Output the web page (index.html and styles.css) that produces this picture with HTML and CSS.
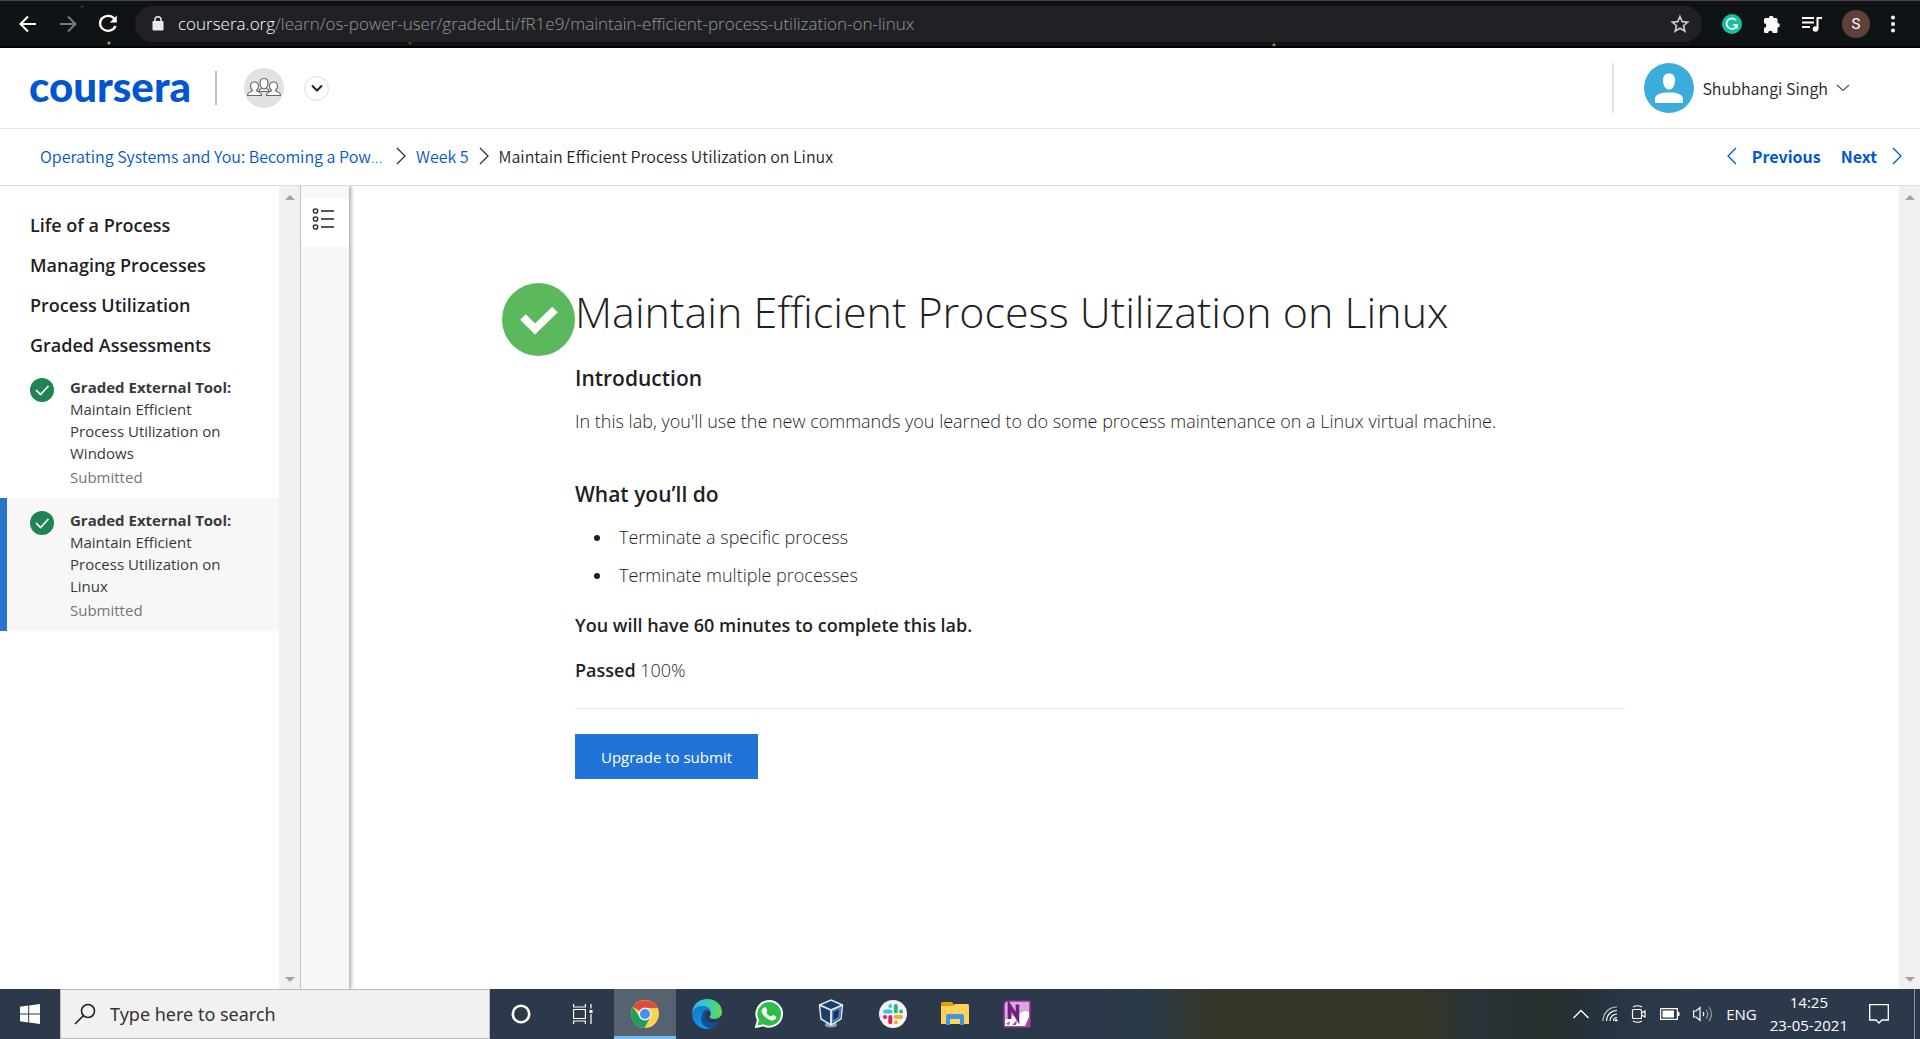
FILE: index.html
```html
<!DOCTYPE html>
<html lang="en">
<head>
<meta charset="utf-8">
<title>Maintain Efficient Process Utilization on Linux | Coursera</title>
<link rel="stylesheet" href="styles.css">
</head>
<body>
<div class="browser">
  <button class="nav-btn" aria-label="Back"><svg width="20" height="20" viewBox="0 0 20 20" fill="none" stroke="#fff" stroke-width="2"><path d="M18 10H3M10 2.500L2.500 10l7.500 7.500"/></svg></button>
  <button class="nav-btn" aria-label="Forward"><svg width="20" height="20" viewBox="0 0 20 20" fill="none" stroke="#77797c" stroke-width="2"><path d="M2 10h15M10 2.500l7.500 7.500-7.500 7.500"/></svg></button>
  <button class="nav-btn" aria-label="Reload"><svg width="20" height="20" viewBox="0 0 20 20" fill="none" stroke="#fff" stroke-width="2.300"><path d="M16.600 5A8 7.500 0 1 0 17.500 12"/><path d="M18.800 1.500v7h-7z" fill="#fff" stroke="none"/></svg></button>
  <div class="address">
    <svg width="12" height="15" viewBox="0 0 12 15"><rect x=".5" y="5" width="11" height="9.500" rx="1.300" fill="#e8eaed"/><path d="M3 6V3.800a3 3 0 0 1 6 0V6" fill="none" stroke="#e8eaed" stroke-width="1.500"/></svg>
    <span class="url"><b>coursera.org</b>/learn/os-power-user/gradedLti/fR1e9/maintain-efficient-process-utilization-on-linux</span>
    <svg width="20" height="20" viewBox="0 0 20 20" fill="none" stroke="#c5c7ca" stroke-width="1.700"><path d="M10 2.500l2.200 5.100 5.500.5-4.200 3.600 1.300 5.400L10 14.200l-4.800 2.900 1.300-5.400-4.200-3.600 5.500-.5z"/></svg>
  </div>
  <div class="extensions">
    <svg width="20" height="20" viewBox="0 0 20 20"><circle cx="10" cy="10" r="10" fill="#15c39a"/><path d="M14 6.300A5.300 5.300 0 1 0 15 11h-4M14.800 10.500v4" fill="none" stroke="#fff" stroke-width="1.700"/></svg>
    <svg width="20" height="20" viewBox="0 0 20 20"><path fill="#fff" d="M2 5.500q0-1.500 1.500-1.500H7a2.200 2.200 0 1 1 4.500 0H14q1.500 0 1.500 1.500V9a2.300 2.300 0 1 1 0 4.600v3.900q0 1.500-1.500 1.500h-3.300a2.300 2.300 0 0 0-4.600 0H3.500Q2 19 2 17.500v-3.600a2.300 2.300 0 0 0 0-4.600z"/></svg>
    <svg width="20" height="18" viewBox="0 0 20 18" fill="none" stroke="#fff" stroke-width="2"><path d="M0 3h12M0 7.500h12M0 12h8"/><path d="M15.500 14V3H20"/><circle cx="13.500" cy="14" r="2.800" fill="#fff" stroke="none"/></svg>
    <span class="profile">S</span>
    <svg width="6" height="18" viewBox="0 0 6 18" fill="#fff"><circle cx="3" cy="2.500" r="2"/><circle cx="3" cy="9" r="2"/><circle cx="3" cy="15.500" r="2"/></svg>
  </div>
</div>

<header class="header">
  <a class="logo" href="#">coursera</a>
  <span class="logo-rule"></span>
  <span class="group"><svg width="36" height="22" viewBox="0 0 36 22" fill="#fff" stroke="#666" stroke-width="1.100"><path d="M13 14.500q0-2.500 3-3h4q3 .5 3 3z"/><path d="M18 1.500c3 0 4 2 4 4.500s-1.500 6-4 6-4-3.500-4-6 1-4.500 4-4.500z"/><path d="M1.500 18.500q0-3 4-4l1-1c-1.500-1.500-2-3-2-4.500 0-2.500 1.500-4 4-4s4 1.500 4 4c0 1.500-.5 3-2 4.500l1 1q4 1 4 4z"/><path d="M20.500 18.500q0-3 4-4l1-1c-1.500-1.500-2-3-2-4.500 0-2.500 1.500-4 4-4s4 1.500 4 4c0 1.500-.5 3-2 4.500l1 1q4 1 4 4z"/></svg></span>
  <button class="switcher" aria-label="Switch programs"><svg width="12" height="8" viewBox="0 0 12 8" fill="none" stroke="#222" stroke-width="2"><path d="M1 1.500l5 5 5-5"/></svg></button>
  <button class="account">
    <svg width="50" height="50" viewBox="0 0 50 50"><circle cx="25" cy="25" r="25" fill="#3badda"/><path fill="#fff" d="M25 10.500c4 0 6 2.500 6 6.500 0 5-2 9.500-6 9.500S19 22 19 17c0-4 2-6.500 6-6.500zM11 40v-4c0-5 6-6.500 14-6.500S39 31 39 36v4z"/></svg>
    <span>Shubhangi Singh</span>
    <svg width="14" height="8" viewBox="0 0 14 8" fill="none" stroke="#555" stroke-width="1.200"><path d="M1 1l6 5.500L13 1"/></svg>
  </button>
</header>

<nav class="crumbs">
  <a class="course" href="#">Operating Systems and You: Becoming a Pow<span class="dots">…</span></a>
  <svg class="sep" width="10" height="18" viewBox="0 0 10 18"><path d="M1 1l8 8-8 8"/></svg>
  <a href="#">Week 5</a>
  <svg class="sep" width="10" height="18" viewBox="0 0 10 18"><path d="M1 1l8 8-8 8"/></svg>
  <span>Maintain Efficient Process Utilization on Linux</span>
  <div class="pager">
    <a href="#"><svg width="10" height="18" viewBox="0 0 10 18"><path d="M9 1L1 9l8 8"/></svg>Previous</a>
    <a href="#">Next<svg width="10" height="18" viewBox="0 0 10 18"><path d="M1 1l8 8-8 8"/></svg></a>
  </div>
</nav>

<div class="workspace">
  <aside class="sidebar">
    <h2>Life of a Process</h2>
    <h2>Managing Processes</h2>
    <h2>Process Utilization</h2>
    <h2>Graded Assessments</h2>
    <a class="item" href="#">
      <svg width="24" height="24" viewBox="0 0 24 24"><circle cx="12" cy="12" r="12" fill="#1f8354"/><path d="M6 12l4.500 4.500L18.500 8" fill="none" stroke="#fff" stroke-width="1.700"/></svg>
      <span class="item-text"><b>Graded External Tool:</b> Maintain Efficient Process Utilization on Windows<small>Submitted</small></span>
    </a>
    <a class="item current" href="#">
      <svg width="24" height="24" viewBox="0 0 24 24"><circle cx="12" cy="12" r="12" fill="#1f8354"/><path d="M6 12l4.500 4.500L18.500 8" fill="none" stroke="#fff" stroke-width="1.700"/></svg>
      <span class="item-text"><b>Graded External Tool:</b> Maintain Efficient Process Utilization on Linux<small>Submitted</small></span>
    </a>
  </aside>
  <div class="scrollbar"><i class="up"></i><i class="down"></i></div>
  <div class="rail">
    <button aria-label="Contents"><svg width="24" height="24" viewBox="0 0 24 24" fill="none" stroke="#222" stroke-width="1.300"><circle cx="3.500" cy="4" r="2.200"/><circle cx="3.500" cy="12" r="2.200"/><circle cx="3.500" cy="20" r="2.200"/><path d="M9 4h13M9 12h13M9 20h13"/></svg></button>
  </div>
  <main class="main">
    <svg class="passed" width="73" height="73" viewBox="0 0 73 73"><circle cx="36.500" cy="36.500" r="36.500" fill="#5cb85c"/><path d="M21 34l12 12 20-19.500" fill="none" stroke="#fff" stroke-width="8" /></svg>
    <article class="article">
      <h1>Maintain Efficient Process Utilization on Linux</h1>
      <h2>Introduction</h2>
      <p>In this lab, you'll use the new commands you learned to do some process maintenance on a Linux virtual machine.</p>
      <h2 class="next">What you’ll do</h2>
      <ul>
        <li>Terminate a specific process</li>
        <li>Terminate multiple processes</li>
      </ul>
      <p class="note"><b>You will have 60 minutes to complete this lab.</b></p>
      <p class="note"><b>Passed</b> 100%</p>
      <hr>
      <button class="submit">Upgrade to submit</button>
    </article>
  </main>
  <div class="scrollbar"><i class="up"></i><i class="down"></i></div>
</div>

<footer class="taskbar">
  <button class="start" aria-label="Start"><svg width="20" height="20" viewBox="0 0 20 20" fill="#fff"><path d="M0 2.800l8.200-1.200v7.900H0zM9.200 1.400L20 0v9.500H9.200zM0 10.500h8.200v7.900L0 17.200zM9.200 10.500H20V20L9.200 18.600z"/></svg></button>
  <label class="search"><svg width="22" height="22" viewBox="0 0 22 22" fill="none" stroke="#222" stroke-width="1.600"><circle cx="14" cy="8" r="6.500"/><path d="M9.500 12.500L1 21"/></svg><input type="text" placeholder="Type here to search" aria-label="Search"></label>
  <button class="tile" aria-label="Cortana"><svg width="22" height="22" viewBox="0 0 22 22"><circle cx="11" cy="11" r="8.200" fill="none" stroke="#fff" stroke-width="2.600"/></svg></button>
  <button class="tile" aria-label="Task view"><svg width="20" height="20" viewBox="0 0 20 20" fill="none" stroke="#fff" stroke-width="1.200"><path d="M.6 5.500h11.800v9H.600zM.6 0v3h11.800V0M.6 20v-3h11.800v3M18 0v4.500M18 10v10"/><path d="M16.500 6h3v3h-3z" fill="#fff" stroke="none"/></svg></button>
  <button class="tile active" aria-label="Chrome"><svg width="28" height="28" viewBox="0 0 28 28"><circle cx="14" cy="14" r="14" fill="#fdd24c"/><path d="M14 14L1.900 7A14 14 0 0 1 26.500 8H14z" fill="#dc4b3e"/><path d="M1.900 7A14 14 0 0 0 13.500 28l5.700-11L8.500 17z" fill="#1ba05f"/><circle cx="14" cy="14" r="6.500" fill="#f1f1f1"/><circle cx="14" cy="14" r="5" fill="#4a8bf5"/></svg></button>
  <button class="tile" aria-label="Edge"><svg width="30" height="30" viewBox="0 0 30 30"><defs><linearGradient id="eg"><stop offset="0" stop-color="#35b4f0"/><stop offset=".5" stop-color="#35c8c8"/><stop offset="1" stop-color="#65dc45"/></linearGradient><linearGradient id="eb" x2="0" y2="1"><stop offset="0" stop-color="#1178c6"/><stop offset="1" stop-color="#1497e8"/></linearGradient></defs><path d="M0 14C1 5 7 0 15 0c9 0 15 6 15 13 0 5-4 7-8 7-4 0-5-1.500-4-3 2-3 0-7-6-8C7 8 2 10 0 14z" fill="url(#eg)"/><path d="M0 14c1.500-4.500 6-7 10-7 6 0 9 3.500 9 7 0-2-2-3-4-3-3 0-5 3-5 7 0 6 4 10 9 11.500C8 32 0 24 0 14z" fill="url(#eb)"/><path d="M10 16c-3 7 2 13 9 13.500 4-1 7-4 9-7.500-5 3-15 2.500-15-5 0-2 1-4 2.500-5C13 12 11 14 10 16z" fill="#104f9d"/></svg></button>
  <button class="tile" aria-label="WhatsApp"><svg width="28" height="28" viewBox="0 0 28 28"><path d="M1 27l2-7A12.800 12.800 0 1 1 8.500 25.300z" fill="#2bbf47" stroke="#fff" stroke-width="2"/><path d="M9 7.500q1.500-1 2.200.5l1 2.300q.3 1-1 2.200 1.500 3 4.600 4.200 1.500-1.900 2.300-1.700l2.700 1.400q.7.500 0 2-2 3-6 1.500-5.500-2-8-7.500-1-3 2.200-4.900z" fill="#fff"/></svg></button>
  <button class="tile" aria-label="VirtualBox"><svg width="26" height="30" viewBox="0 0 26 30"><path d="M8 22h10l1 5q-6 3-12 0z" fill="#8ba1bd"/><path d="M13 1l11.500 5-1.500 14-10 6L3 20 1.500 6z" fill="#1c3e68" stroke="#dce7f3" stroke-width="1.500"/><path d="M13 11l10.500-4.500-1 13L13 25z" fill="#4d79b4"/><path d="M1.500 6L13 11l11.500-5M13 11v15" fill="none" stroke="#e6eef7" stroke-width="1.800"/><path d="M15.500 13l5.500-2.500-.8 7.500-4.700 3z" fill="#173356"/></svg></button>
  <button class="tile" aria-label="Slack"><svg width="28" height="28" viewBox="0 0 28 28" fill="none" stroke-width="4" stroke-linecap="round"><circle cx="14" cy="14" r="14" fill="#f5f5f5"/><path d="M11.200 6h.1M6 11.500h5.500" stroke="#36c5f0"/><path d="M16.800 6v5.500M22 11.500h.1" stroke="#2eb67d"/><path d="M22 17h-5.200M16.800 22.300h.1" stroke="#ecb22e"/><path d="M11.300 22.300V17M6 17h.1" stroke="#e01e5a"/></svg></button>
  <button class="tile" aria-label="File Explorer"><svg width="28" height="24" viewBox="0 0 28 24"><path d="M0 1.500Q0 0 1.500 0H11l2 2.500V6H0z" fill="#dfa000"/><path d="M0 4h12l2-2h12.500Q28 2 28 3.500V22H0z" fill="#fdd35b"/><path d="M5 23V14q0-2 2-2h14q2 0 2 2v9h-4v-6H9v6z" fill="#3e97dd"/></svg></button>
  <button class="tile" aria-label="OneNote"><svg width="28" height="28" viewBox="0 0 28 28"><path d="M1 5Q1 1 5 1h22v26H1z" fill="#dba9dc" stroke="#8c2f8e" stroke-width="1.500"/><path d="M2 20l8-4 12-5 4 1v14H2z" fill="#fff"/><path d="M22 26l4-9v9zM9 25l5-5-1 5zM3 24l4-3-1 4z" fill="#a04aa2"/><path d="M6.500 19V5.500L14.500 18V4.500" fill="none" stroke="#6c2080" stroke-width="3.600"/></svg></button>

  <div class="tray">
    <svg width="16" height="10" viewBox="0 0 16 10" fill="none" stroke="#fff" stroke-width="1.400"><path d="M.5 9L8 1.500 15.500 9"/></svg>
    <svg width="16" height="16" viewBox="0 0 16 16" fill="none" stroke="#fff" stroke-width="1.200"><path d="M1 15C1 7 7 1 15 1" opacity=".7"/><path d="M4.500 15C4.500 9 9 4.500 15 4.500M8 15c0-4 3-7 7-7"/><path d="M11.500 15c0-2 1.500-3.500 3.500-3.500"/><circle cx="14.200" cy="14.200" r="1.300" fill="#fff" stroke="none"/></svg>
    <svg width="16" height="18" viewBox="0 0 16 18" fill="none" stroke="#fff" stroke-width="1.200"><rect x="1.500" y="4.500" width="9" height="9" rx="1"/><path d="M10.500 8l3.500-2v6l-3.500-2M2 2q4.500-2.500 9 0M2 16q4.500 2.500 9 0"/></svg>
    <svg width="20" height="12" viewBox="0 0 20 12"><path d="M.6.6h16.800v10.800H.6z" fill="none" stroke="#fff" stroke-width="1.200"/><path d="M2.500 2.500H14v7H2.500zM18 4h1.500v4H18z" fill="#fff"/></svg>
    <svg width="20" height="16" viewBox="0 0 20 16" fill="none" stroke="#fff" stroke-width="1.200"><path d="M.6 5H3l4-3.500v13L3 11H.600zM10 6q1.500 2 0 4"/><path d="M13 3.500q3.500 4.500 0 9M16 1q5 7 0 14" opacity=".5"/></svg>
    <span class="lang">ENG</span>
    <time class="clock"><span>14:25</span><span>23-05-2021</span></time>
    <svg class="notices" width="20" height="20" viewBox="0 0 20 20" fill="none" stroke="#fff" stroke-width="1.300"><path d="M.7.700h18.600V16H13l-3 3-3-3H.7z"/></svg>
    <span class="desktop-edge"></span>
  </div>
</footer>
</body>
</html>
```
FILE: styles.css
```css
* { box-sizing: border-box; }
body {
  margin: 0;
  min-height: 100vh;
  display: flex;
  flex-direction: column;
  background: #fff;
  color: #1f1f1f;
  font-family: "Open Sans", sans-serif;
  font-size: 18px;
}
button { border: 0; padding: 0; background: none; color: inherit; font: inherit; display: flex; align-items: center; justify-content: center; }
a { color: inherit; text-decoration: none; }
svg { flex: none; display: block; }

/* Browser toolbar */
.browser {
  height: 48px;
  display: flex;
  align-items: center;
  padding-left: 8px;
  background: radial-gradient(circle at 82px 6px, #333 0 1px, transparent 2px), radial-gradient(circle at 109px 42px, #998 0 1px, transparent 2px), radial-gradient(circle at 410px 42px, #633 0 1px, transparent 2px), radial-gradient(circle at 1274px 44px, #887 0 1px, transparent 2px), #101315;
  border-top: 1px solid #444;
  border-bottom: 2px solid #000;
}
.nav-btn { width: 40px; height: 36px; }
.address {
  flex: 1;
  height: 36px;
  margin-left: 7px;
  padding: 0 12px 0 17px;
  display: flex;
  align-items: center;
  border-radius: 18px;
  background: #202124;
}
.url { flex: 1; padding-left: 14px; color: #96999c; font-family: "Open Sans", sans-serif; font-size: 17px; font-weight: 350; white-space: nowrap; }
.url b { color: #fff; font-weight: 350; }
.extensions { display: flex; align-items: center; gap: 20px; padding: 0 24px 0 20px; }
.profile { width: 28px; height: 28px; border-radius: 50%; background: #5d4037; color: #fff; font: 15px/28px Roboto, sans-serif; text-align: center; }

/* Site header */
.header {
  height: 81px;
  display: flex;
  align-items: center;
  padding: 0 70px 0 29px;
  border-bottom: 1px solid #e1e1e1;
}
.logo { width: 186px; padding-bottom: 4px; color: #0056d2; font: 900 42px/48px Lato, sans-serif; }
.logo-rule { width: 2px; height: 34px; background: #bdbdbd; }
.group { width: 40px; height: 40px; margin-left: 27px; border-radius: 50%; background: #e1e1e1; display: flex; align-items: center; justify-content: center; }
.switcher { width: 25px; height: 25px; margin-left: 20px; border: 1px solid #ddd; border-radius: 50%; }
.account { height: 50px; margin-left: auto; padding-left: 30px; border-left: 2px solid #e1e1e1; gap: 8px; color: #222; font: 350 16px/24px "Noto Sans CJK SC", sans-serif; }

/* Breadcrumbs */
.crumbs {
  height: 57px;
  display: flex;
  align-items: center;
  gap: 10px;
  padding: 0 18px 2px 40px;
  border-bottom: 1px solid #ddd;
  font: 350 16px/24px "Noto Sans CJK SC", sans-serif;
}
.crumbs a { color: #0056d2; }
.course { min-width: 346px; white-space: nowrap; }
.dots { font-family: "Open Sans", sans-serif; }
.crumbs svg { fill: none; stroke: #0056d2; stroke-width: 1.300; }
.crumbs .sep { stroke: #333; }
.pager { margin-left: auto; display: flex; gap: 20px; font-weight: 700; }
.pager a { display: flex; align-items: center; gap: 15px; }

/* Workspace */
.workspace { flex: 1; display: flex; }
.sidebar { width: 279px; padding-top: 19px; }
.sidebar h2 { margin: 0; padding-left: 30px; font-size: 18px; line-height: 40px; font-weight: 600; }
.item { display: flex; gap: 16px; padding: 11px 40px 10px 30px; color: #373a3c; font-size: 15px; line-height: 22px; }
.item svg { margin-top: 2px; }
.item b { font-weight: 700; display: block; white-space: nowrap; }
.item small { display: block; margin-top: 2px; color: #757575; font-size: 15px; }
.current { padding-left: 23px; border-left: 7px solid #2a73cc; background: #f7f7f7; }
.scrollbar { width: 21px; padding: 9px 0 7px; display: flex; flex-direction: column; justify-content: space-between; align-items: center; background: #f0f0f0; }
.up, .down { border: 5px solid transparent; }
.up { border-top: 0; border-bottom-color: #a3a3a3; }
.down { border-bottom: 0; border-top-color: #a3a3a3; }
.rail { width: 49px; padding-top: 12px; border-left: 1px solid #c4c4c4; background: #f7f7f7; box-shadow: 1px 0 4px 1px #aaa; clip-path: inset(0 -8px 0 0); }
.rail button { width: 48px; height: 48px; padding-right: 2px; padding-bottom: 6px; background: #fff; }
.main { flex: 1; display: flex; align-items: flex-start; padding: 97px 40px 40px 153px; }
.article { flex: 1; max-width: 1050px; font-weight: 350; }
.article h1 { margin: 0; font-size: 43px; line-height: 57px; font-weight: 300; }
.article h2 { margin: 24px 0 0; font-size: 21px; line-height: 28px; font-weight: 600; }
.article .next { margin-top: 45px; }
.article p { margin: 15px 0 0; line-height: 28px; }
.article .note { margin-top: 17px; }
.article b { font-weight: 600; }
.article ul { margin: 10px 0 0; padding-left: 38px; line-height: 38px; }
.article li { padding-left: 6px; }
.article hr { margin: 24px 0 25px; border: 0; border-top: 1px solid #e7e7e7; }
.submit { width: 183px; height: 45px; background: #2073d8; color: #fff; font-size: 15px; font-weight: 400; }

/* Taskbar */
.taskbar { height: 50px; display: flex; background: linear-gradient(90deg, #2c394a 57%, #2a3b46 60%, #353629 63%, #353629 74%, #2a3338 77%, #262e2d 81%, #273543 84%, #2c394a 88%); color: #fff; }
.start { width: 60px; }
.search { width: 430px; display: flex; align-items: center; gap: 14px; padding-left: 13px; background: #f1f1f1; border: 1px solid #bbb; }
.search input { flex: 1; min-width: 0; border: 0; padding: 0; background: none; font: 18px/24px "Noto Sans", sans-serif; }
.search input::placeholder { color: #333; opacity: 1; }
.tile { width: 62px; }
.active { background: #56626f; border-bottom: 3px solid #76b9ed; padding-top: 3px; }
.tray { margin-left: auto; display: flex; align-items: center; gap: 13px; font-family: "Open Sans", sans-serif; font-size: 15px; }
.clock { display: grid; text-align: center; line-height: 23px; white-space: nowrap; }
.notices { margin: 0 12px 0 8px; }
.desktop-edge { width: 6px; align-self: stretch; border-left: 1px solid #8c949e; }
```
